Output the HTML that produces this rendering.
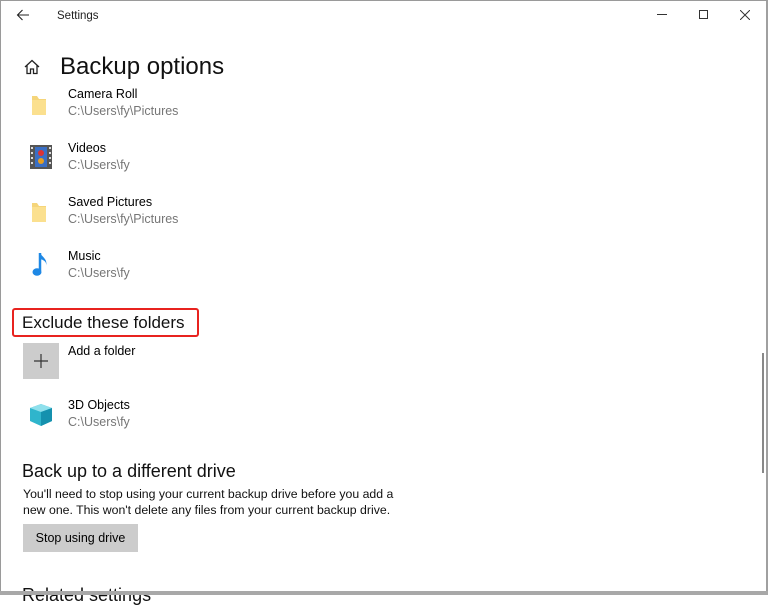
<!DOCTYPE html>
<html><head><meta charset="utf-8"><style>
*{margin:0;padding:0;box-sizing:border-box}
body{width:768px;height:595px;background:#fff;font-family:"Liberation Sans",sans-serif;position:relative;overflow:hidden;color:#000}
.a{position:absolute;white-space:nowrap}
.t{font-size:12.5px;color:#000}
.s{font-size:12.5px;color:#767676}
</style></head><body>
<div class="a" style="left:0;top:0;width:768px;height:595px;border:1px solid #9a9a9a;border-right:2px solid #a0a0a0;border-bottom:3px solid #a8a8a8"></div>
<svg class="a" style="left:16px;top:9px" width="14" height="12" viewBox="0 0 14 12"><path d="M13 6H1.5M6.5 1L1.5 6l5 5" stroke="#222" stroke-width="1.1" fill="none"/></svg>
<div class="a" style="left:57px;top:10px;font-size:11.5px;color:#222">Settings</div>
<div class="a" style="left:657px;top:14px;width:10px;height:1px;background:#333"></div>
<div class="a" style="left:699px;top:10px;width:9px;height:9px;border:1px solid #333"></div>
<svg class="a" style="left:740px;top:10px" width="10" height="10"><path d="M0 0L10 10M10 0L0 10" stroke="#333" stroke-width="1"/></svg>
<svg class="a" style="left:24px;top:59px" width="16" height="16" viewBox="0 0 16 16"><path d="M1 8L8 1.5 15 8M3 6.5V14.5H6.5V10H9.5V14.5H13V6.5" stroke="#222" stroke-width="1.3" fill="none"/></svg>
<div class="a" style="left:60px;top:53px;font-size:24px;color:#111">Backup options</div>

<svg class="a" style="left:31px;top:94px" width="16" height="22"><path d="M1 2h5l2 3h7v16H1z" fill="#f5d57a"/><path d="M1 6h14v15H1z" fill="#fbe08f"/></svg>
<div class="a t" style="left:68px;top:87px">Camera Roll</div>
<div class="a s" style="left:68px;top:104px">C:\Users\fy\Pictures</div>

<svg class="a" style="left:30px;top:145px" width="22" height="24"><rect width="22" height="24" fill="#555"/><rect x="5" y="2" width="12" height="20" fill="#3a6fc4"/><circle cx="11" cy="8" r="3" fill="#d33"/><circle cx="11" cy="16" r="3" fill="#e8a020"/><g fill="#ddd"><rect x="1" y="2" width="2" height="2"/><rect x="1" y="7" width="2" height="2"/><rect x="1" y="12" width="2" height="2"/><rect x="1" y="17" width="2" height="2"/><rect x="19" y="2" width="2" height="2"/><rect x="19" y="7" width="2" height="2"/><rect x="19" y="12" width="2" height="2"/><rect x="19" y="17" width="2" height="2"/></g></svg>
<div class="a t" style="left:68px;top:141px">Videos</div>
<div class="a s" style="left:68px;top:158px">C:\Users\fy</div>

<svg class="a" style="left:31px;top:201px" width="16" height="22"><path d="M1 2h5l2 3h7v16H1z" fill="#f5d57a"/><path d="M1 6h14v15H1z" fill="#fbe08f"/></svg>
<div class="a t" style="left:68px;top:195px">Saved Pictures</div>
<div class="a s" style="left:68px;top:212px">C:\Users\fy\Pictures</div>

<svg class="a" style="left:32px;top:252px" width="18" height="26"><path d="M8 1v18" stroke="#1e88e5" stroke-width="2.5"/><ellipse cx="5" cy="20" rx="4.5" ry="3.8" fill="#1e88e5"/><path d="M8 1c2 4 8 6 6 13 1-4-2-6-6-7z" fill="#1e88e5"/></svg>
<div class="a t" style="left:68px;top:249px">Music</div>
<div class="a s" style="left:68px;top:266px">C:\Users\fy</div>

<div class="a" style="left:12px;top:308px;width:187px;height:29px;border:2px solid #e8231f;border-radius:3px"></div>
<div class="a" style="left:22px;top:313px;font-size:17px;color:#111">Exclude these folders</div>

<div class="a" style="left:23px;top:343px;width:36px;height:36px;background:#cccccc"></div>
<svg class="a" style="left:34px;top:354px" width="14" height="14"><path d="M7 0v14M0 7h14" stroke="#333" stroke-width="1.2"/></svg>
<div class="a t" style="left:68px;top:344px">Add a folder</div>

<svg class="a" style="left:29px;top:403px" width="24" height="24"><path d="M12 1l11 4v13l-11 5-11-5V5z" fill="#2fb5cc"/><path d="M12 1l11 4-11 4-11-4z" fill="#8fe0ec"/><path d="M12 9v14l11-5V5z" fill="#1591ae"/></svg>
<div class="a t" style="left:68px;top:398px">3D Objects</div>
<div class="a s" style="left:68px;top:415px">C:\Users\fy</div>

<div class="a" style="left:22px;top:461px;font-size:18px;color:#111">Back up to a different drive</div>
<div class="a" style="left:23px;top:486px;font-size:12.3px;color:#111;line-height:16px">You'll need to stop using your current backup drive before you add a<br>new one. This won't delete any files from your current backup drive.</div>
<div class="a" style="left:23px;top:524px;width:115px;height:28px;background:#cccccc;font-size:12.5px;text-align:center;line-height:28px">Stop using drive</div>
<div class="a" style="left:22px;top:585px;font-size:18px;color:#111">Related settings</div>
<div class="a" style="left:0;top:591px;width:768px;height:4px;background:#a8a8a8"></div>
<div class="a" style="left:762px;top:353px;width:2px;height:120px;background:#888"></div>
</body></html>
